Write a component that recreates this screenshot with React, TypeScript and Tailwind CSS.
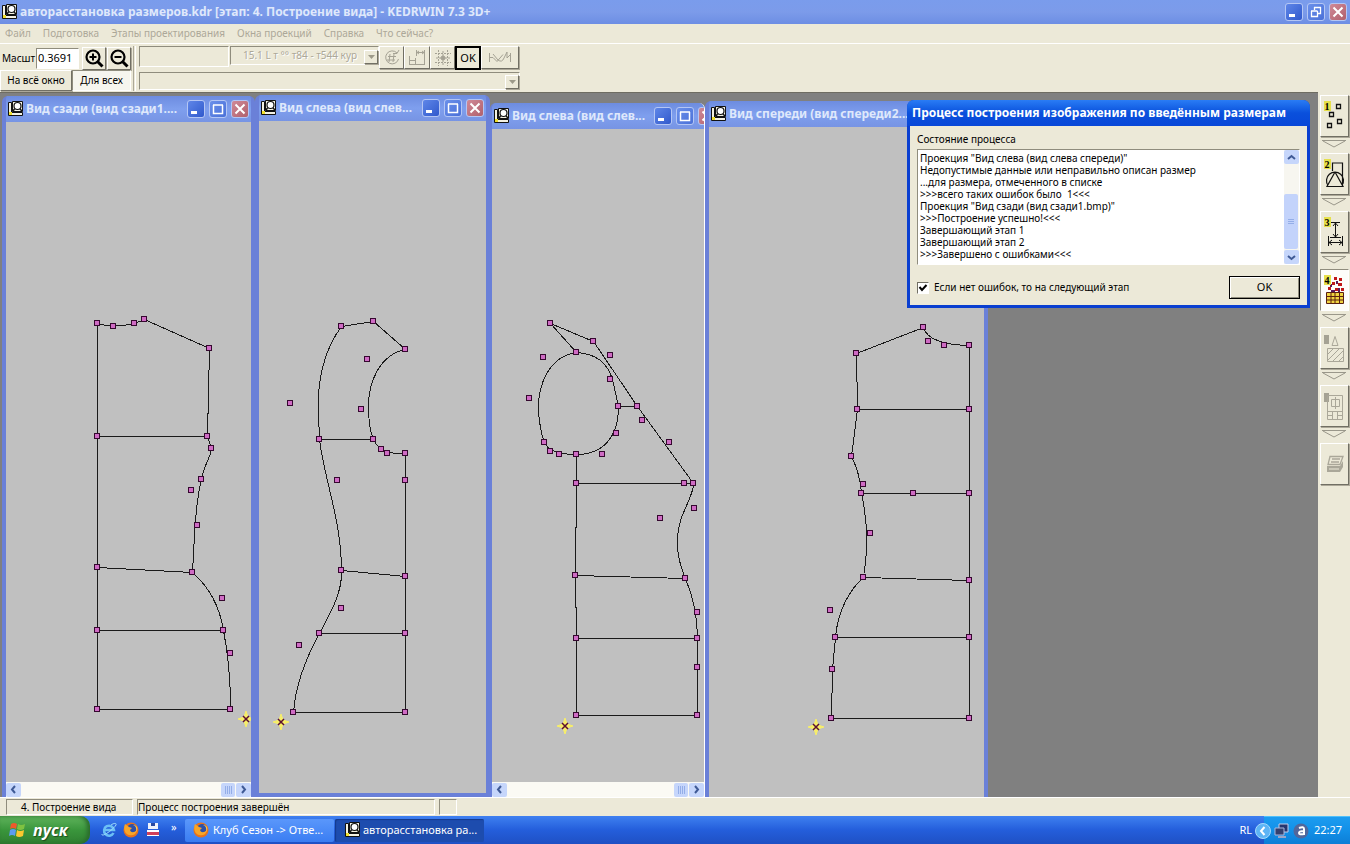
import { useState } from "react";
import type { ReactNode } from "react";

type Point = [number, number];

type Sheet = {
  origin: Point;
  paths: string[];
  nodes: Point[];
  star: Point;
};

const raised =
  "border border-t-white border-l-white border-r-[#716f64] border-b-[#716f64] shadow-[1px_1px_0_#aca899]";
const sunken =
  "border border-t-[#8f8c7d] border-l-[#8f8c7d] border-r-white border-b-white";
const disabledText = "text-[#aca899] [text-shadow:1px_1px_0_#ffffff]";

const menuItems = [
  "Файл",
  "Подготовка",
  "Этапы проектирования",
  "Окна проекций",
  "Справка",
  "Что сейчас?",
];

const logLines = [
  'Проекция "Вид слева (вид слева спереди)"',
  "Недопустимые данные или неправильно описан размер",
  "...для размера, отмеченного в списке",
  ">>>всего таких ошибок было  1<<<",
  'Проекция "Вид сзади (вид сзади1.bmp)"',
  ">>>Построение успешно!<<<",
  "Завершающий этап 1",
  "Завершающий этап 2",
  ">>>Завершено с ошибками<<<",
];

const backSheet: Sheet = {
  origin: [6, 122],
  paths: [
    "M97 323V709H230C230 685 229 660 223 630C219 605 208 586 192 572L194 535C195 515 197 495 201 479C203 465 210 458 211 448L207 436L209 348L144 319L134 323Q112 328 97 323",
    "M97 436H207",
    "M97 567L192 572",
    "M97 630H223",
  ],
  nodes: [
    [97, 323], [113, 326], [134, 323], [144, 319], [209, 348], [97, 436],
    [207, 436], [211, 448], [201, 479], [191, 490], [197, 525], [97, 567],
    [192, 572], [222, 598], [97, 630], [223, 630], [230, 653], [97, 709],
    [230, 709],
  ],
  star: [246, 719],
};

const leftBackSheet: Sheet = {
  origin: [259, 121],
  paths: [
    "M341 326L373 321L405 349C380 354 368 380 368 406C368 420 370 432 373 439Q378 449 387 452Q395 453 405 453V712H293C295 685 304 660 319 633C330 612 342 592 341 570C341 520 324 480 319 439C318 420 318 410 318 400C318 380 323 350 341 326",
    "M319 439H373",
    "M341 570L405 576",
    "M319 633H405",
  ],
  nodes: [
    [341, 326], [373, 321], [405, 349], [367, 359], [361, 409], [290, 403],
    [319, 439], [373, 439], [381, 449], [387, 453], [405, 453], [337, 480],
    [405, 480], [341, 570], [405, 576], [341, 608], [319, 633], [405, 633],
    [299, 645], [293, 712], [405, 712],
  ],
  star: [281, 722],
};

const leftFrontSheet: Sheet = {
  origin: [492, 129],
  paths: [
    "M576 352L550 323L593 341L637 406L693 483C693 498 677 515 677 538C676 555 681 568 685 578C692 595 697 618 697 638V715H576V638L575 575L576 483",
    "M576 454V483",
    "M576 352C548 356 538 385 538 406C538 420 541 435 544 442Q549 454 576 454C603 454 618 436 618 406L612 379C607 362 595 353 576 352",
    "M618 406H637",
    "M576 483H693",
    "M575 575L685 578",
    "M576 638H697",
  ],
  nodes: [
    [550, 323], [593, 341], [576, 352], [610, 355], [543, 357], [610, 379],
    [529, 398], [618, 406], [637, 406], [642, 420], [669, 442], [616, 433],
    [544, 442], [550, 451], [559, 454], [576, 454], [602, 454], [576, 483],
    [684, 483], [693, 483], [694, 508], [660, 518], [575, 575], [685, 578],
    [697, 612], [576, 638], [697, 638], [697, 667], [576, 715], [697, 715],
  ],
  star: [565, 726],
};

const frontSheet: Sheet = {
  origin: [709, 127],
  paths: [
    "M856 353L923 327Q928 344 969 345V718H831L832 669L835 637C837 612 848 590 863 577C868 548 867 520 861 493C860 478 856 466 851 456L857 409L856 353",
    "M857 409H969",
    "M861 493H969",
    "M863 577L969 580",
    "M835 637H969",
  ],
  nodes: [
    [923, 327], [928, 341], [944, 345], [969, 345], [856, 353], [857, 409],
    [969, 409], [851, 456], [863, 484], [861, 493], [913, 493], [969, 493],
    [870, 533], [863, 577], [969, 580], [830, 610], [835, 637], [969, 637],
    [832, 669], [831, 718], [969, 718],
  ],
  star: [816, 727],
};

function AppIcon() {
  return (
    <svg className="size-4 shrink-0" viewBox="0 0 16 16">
      <path d="M.5 1.500h3v10h11v3H.5z" fill="#f4f2e4" stroke="#111" />
      <path d="M1 11h3v3H1z" fill="#f0e030" />
      <path d="M4.500 .5h10v10h-10z" fill="#f4f2e4" stroke="#111" />
      <circle cx="9.500" cy="5" r="3.500" fill="#fff" stroke="#111" strokeWidth="1.200" />
      <path d="M12 8l2 2M6.500 8L5 10" stroke="#111" strokeWidth="1.500" />
    </svg>
  );
}

function CaptionButton({ kind }: { kind: "min" | "max" | "restore" | "close" }) {
  const tone =
    kind === "close"
      ? "from-[#d08a98] to-[#b0606c]"
      : kind === "min"
        ? "from-[#5f86e8] to-[#3159cc]"
        : "from-[#6b90ea] to-[#4a70d8]";
  return (
    <button
      type="button"
      aria-label={kind}
      className={`size-[18px] shrink-0 rounded-[3px] border border-[#b4c6f4] bg-gradient-to-br ${tone}`}
    >
      <svg className="size-4" viewBox="0 0 16 16" fill="none" stroke="#fff">
        {kind === "min" && <path d="M3 11.500h6" strokeWidth="3" />}
        {kind === "max" && <path d="M3 4h10M3.500 4v8.500h9V4" strokeWidth="1.500" />}
        {kind === "restore" && (
          <path d="M6 3.500h7M6.500 3v3M12.500 3v6.500H10M3 7h6.500M3.500 7v5.500h6V7" strokeWidth="1.300" />
        )}
        {kind === "close" && <path d="M3.500 3.500l9 9M12.500 3.500l-9 9" strokeWidth="2" />}
      </svg>
    </button>
  );
}

function Drawing({ sheet }: { sheet: Sheet }) {
  const [ox, oy] = sheet.origin;
  const [sx, sy] = sheet.star;
  return (
    <svg className="block min-h-0 w-full flex-1 bg-[#c0c0c0]" shapeRendering="crispEdges">
      <g transform={`translate(${-ox} ${-oy})`}>
        <g transform="translate(.5 .5)" fill="none" stroke="#1a1a1a">
          {sheet.paths.map((d) => (
            <path key={d} d={d} />
          ))}
        </g>
        {sheet.nodes.map(([x, y]) => (
          <g key={`${x}-${y}`}>
            <rect x={x - 3} y={y - 3} width="6" height="6" fill="#35082f" />
            <rect x={x - 2} y={y - 2} width="4" height="4" fill="#cf6bc4" />
          </g>
        ))}
        <g transform={`translate(${sx} ${sy})`} shapeRendering="auto">
          <path d="M0-8L2-2L8 0L2 2L0 8L-2 2L-8 0L-2-2z" fill="#f7ee6a" stroke="#f7ee6a" />
          <path d="M-3-3L3 3M3-3L-3 3" stroke="#5b1030" strokeWidth="1.500" />
        </g>
      </g>
    </svg>
  );
}

function ScrollArrow({ dir }: { dir: "left" | "right" | "up" | "down" }) {
  const d = {
    left: "M8 3L5 6.500L8 10",
    right: "M5 3L8 6.500L5 10",
    up: "M3 8L6.500 5L10 8",
    down: "M3 5L6.500 8L10 5",
  }[dir];
  return (
    <button
      type="button"
      aria-label={`scroll ${dir}`}
      className="h-[14px] w-[15px] shrink-0 rounded-[2px] bg-[#c6d6fb]"
    >
      <svg className="mx-auto size-[13px]" viewBox="0 0 13 13" fill="none" stroke="#3f5a96" strokeWidth="2">
        <path d={d} />
      </svg>
    </button>
  );
}

function HScroll() {
  return (
    <div className="flex h-[15px] shrink-0 items-center bg-[#fbfaf4]">
      <ScrollArrow dir="left" />
      <div className="flex-1" />
      <div className="mr-px flex h-[14px] w-[14px] items-center justify-center gap-px rounded-[2px] bg-[#c6d6fb]">
        <i className="h-2 w-px bg-[#94aee8]" />
        <i className="h-2 w-px bg-[#94aee8]" />
        <i className="h-2 w-px bg-[#94aee8]" />
        <i className="h-2 w-px bg-[#94aee8]" />
      </div>
      <ScrollArrow dir="right" />
    </div>
  );
}

type ViewProps = {
  title: string;
  frame: string;
  bar?: string;
  sheet: Sheet;
  scroll?: boolean;
};

function ViewWindow({ title, frame, bar = "", sheet, scroll }: ViewProps) {
  return (
    <section
      className={`absolute flex flex-col overflow-hidden rounded-t-[6px] border-[#6a80d8] bg-[#7a96df] ${frame}`}
    >
      <header
        className={`flex h-[26px] shrink-0 items-center gap-[2px] bg-gradient-to-b from-[#6d8ce0] via-[#7f9fee] to-[#7794e4] px-[2px] ${bar}`}
      >
        <AppIcon />
        <h2 className="min-w-0 flex-1 truncate text-[12px] font-bold text-[#dfe8fb]">
          {title}
        </h2>
        <div className="flex gap-1">
          <CaptionButton kind="min" />
          <CaptionButton kind="max" />
          <CaptionButton kind="close" />
        </div>
      </header>
      <Drawing sheet={sheet} />
      {scroll && <HScroll />}
    </section>
  );
}

function ToolButton({ label, className = "w-[24px]", children }: { label: string; className?: string; children: ReactNode }) {
  return (
    <button
      type="button"
      aria-label={label}
      className={`flex h-[23px] items-center justify-center bg-[#ece9d8] ${raised} ${className}`}
    >
      {children}
    </button>
  );
}

function Zoomer({ plus }: { plus?: boolean }) {
  return (
    <svg className="size-5" viewBox="0 0 20 20" fill="none" stroke="#000">
      <circle cx="9" cy="9" r="6.500" strokeWidth="2.200" />
      <path d="M13.500 13.500l5 5" strokeWidth="3" />
      <path d={plus ? "M5.500 9h7M9 5.500v7" : "M5.500 9h7"} strokeWidth="2" />
    </svg>
  );
}

function DropArrow() {
  return (
    <span
      className={`pointer-events-none absolute right-px bottom-px flex h-[14px] w-[14px] items-center justify-center bg-[#ece9d8] ${raised}`}
    >
      <svg className="h-1 w-[7px]" viewBox="0 0 7 4">
        <path d="M0 0h7L3.500 4z" fill="#9d9a8a" />
      </svg>
    </span>
  );
}

function Toolbar() {
  const [scale, setScale] = useState("0.3691");
  return (
    <div className="flex h-[49px] items-start border-t border-white pt-[2px]">
      <div className="w-[131px]">
        <div className="flex h-[24px] items-center">
          <label htmlFor="scale" className="w-[36px] pl-[2px]">
            Масшт
          </label>
          <input
            id="scale"
            value={scale}
            onChange={(e) => setScale(e.target.value)}
            className={`mr-[3px] h-[21px] w-[43px] bg-white pb-[2px] pl-px text-[11px] ${sunken}`}
          />
          <ToolButton label="Увеличить">
            <Zoomer plus />
          </ToolButton>
          <ToolButton label="Уменьшить" className="ml-px w-[24px]">
            <Zoomer />
          </ToolButton>
        </div>
        <div className="flex h-[21px]">
          <button type="button" className={`w-[72px] bg-[#ece9d8] ${raised}`}>
            На всё окно
          </button>
          <button type="button" className={`w-[59px] bg-[#f6f5ee] ${sunken}`}>
            Для всех
          </button>
        </div>
      </div>
      <div className="mx-[2px] h-[45px] w-[3px] border-x border-l-[#aca899] border-r-white" />
      <div className="w-[382px] pl-px">
        <div className="flex h-[24px]">
          <div className={`h-[21px] w-[90px] shrink-0 ${sunken}`} />
          <div className="relative ml-px h-[19px] w-[149px] shrink-0">
            <select
              disabled
              aria-label="Размер"
              className={`h-full w-full appearance-none pl-[12px] opacity-100 ${sunken} ${disabledText}`}
            >
              <option>15.1 L т °° т84 - т544 кур</option>
            </select>
            <DropArrow />
          </div>
          <ToolButton label="Поворот" className="w-[25px] shrink-0">
            <svg className="size-[18px]" viewBox="0 0 18 18" fill="none" stroke="#a5a294">
              <path d="M14 4A6.500 6.500 0 1 0 15.500 10M16 1l-2 3.500h-4M7 5L6 13M11 5l-1 8M5 7.500h8M4 11h8" />
            </svg>
          </ToolButton>
          <ToolButton label="Размеры" className="w-[26px] shrink-0">
            <svg className="size-[18px]" viewBox="0 0 18 18" fill="none" stroke="#a5a294">
              <path d="M1.500 7v9M1 11.500h6M7.500 9v6M1 15.500h16M8.500 1v6M16.500 1v14M9 3.500h7M11 2L9 3.500 11 5M14 2l2 1.500L14 5" />
            </svg>
          </ToolButton>
          <ToolButton label="Сетка" className="w-[25px] shrink-0">
            <svg className="size-[18px]" viewBox="0 0 18 18" fill="none" stroke="#a5a294">
              <path d="M4.500 1v16M13.500 1v16M1 4.500h16M1 13.500h16M9 2v14M2 9h14" strokeDasharray="2 1" />
              <circle cx="9" cy="9" r="2" fill="#a5a294" />
            </svg>
          </ToolButton>
          <button type="button" className="h-[24px] w-[26px] shrink-0 border-2 border-black bg-[#ece9d8] text-[11px]">
            OK
          </button>
          <ToolButton label="Кривая" className="w-[38px] shrink-0">
            <svg className="h-[18px] w-[24px]" viewBox="0 0 24 18" fill="none" stroke="#a5a294">
              <path d="M1.500 4v9M22.500 4v9M2 8.500h3l4 4 6-7M5 5l5 6q4 3 6-2l3-6v6l3-3" />
            </svg>
          </ToolButton>
        </div>
        <div className="relative mt-[2px] h-[18px] w-[381px]">
          <select disabled aria-label="Список" className={`h-full w-full appearance-none opacity-100 ${sunken}`} />
          <DropArrow />
        </div>
      </div>
    </div>
  );
}

function StageNumber({ n }: { n: string }) {
  return (
    <span className="absolute top-[5px] left-[3px] flex h-[10px] w-[7px] items-center justify-center bg-[#e6e04a] font-['Liberation_Serif'] text-[10px] font-bold">
      {n}
    </span>
  );
}

const stages: { n: string; name: string; art: ReactNode }[] = [
  {
    n: "1",
    name: "Точки",
    art: <path d="M15.500 8.500h4v4h-4zM8.500 16.500h4v4h-4zM16.500 23.500h4v4h-4zM6.500 27.500h4v4h-4z" stroke="#111" strokeWidth="1.300" />,
  },
  {
    n: "2",
    name: "Контуры",
    art: <path d="M11.500 17V9h10v24M14 18L6 32.500h16L14 18M7 31.500a8.500 8.500 0 1 1 14 0" stroke="#111" strokeWidth="1.200" />,
  },
  {
    n: "3",
    name: "Размеры",
    art: <path d="M9 10.500h10M14.500 11v14M12 14l2.500-3 2.500 3M12 22l2.500 3 2.500-3M9 25.500h11M7.500 24v10M21.500 24v10M8 30.500h13M11 28l-3 2.500 3 2.500M18 28l3 2.500-3 2.500" stroke="#111" />,
  },
  {
    n: "4",
    name: "Построение вида",
    art: (
      <>
        <path d="M5.500 22.500h17v11h-17z" fill="#f0d440" stroke="#5a2010" />
        <path d="M6 26.500h17M6 30h17M10 23v11M14 23v11M18.500 23v11" stroke="#5a2010" />
        <path d="M13 7h3v3h-3zM18 8h3v3h-3zM11 12h3v3h-3zM17 13h4v3h-4zM7 17h3v3H7zM14 18h3v3h-3zM20 18h3v3h-3z" fill="#c01818" />
        <path d="M9 14h2v3H9zM15 11h2v3h-2zM10 20h4v2h-4zM17 18h2v4h-2z" fill="#5a1a5a" />
      </>
    ),
  },
  {
    n: "",
    name: "Раскладка",
    art: <path d="M6.500 20.500h16v13h-16zM7 26l6-6M7 32l12-12M11 34l12-12M17 34l6-6M11 17.500l3-9 3 9z" stroke="#aaa799" />,
  },
  {
    n: "",
    name: "Чертёж",
    art: <path d="M6.500 9.500h15v24h-15zM10.500 13.500h8v7h-8zM14.500 11v12M7 25.500h14M11.500 26v7M16.500 26v7M7 29.500h5M16 29.500h5" stroke="#aaa799" />,
  },
  {
    n: "",
    name: "Печать",
    art: (
      <>
        <path d="M9 12.500h13l-3 8H7zM11 15h8M10 18h8" stroke="#aaa799" strokeWidth="1.300" />
        <path d="M6 22h13l3-5v6l-3 5H6z" fill="#aaa799" />
        <path d="M8 25h10" stroke="#ece9d8" />
      </>
    ),
  },
];

function StageBar() {
  return (
    <nav className="flex w-[32px] shrink-0 flex-col items-center bg-[#ece9d8] pt-[3px]">
      {stages.map((s, i) => (
        <div key={s.name} className="flex h-[58px] flex-col items-center">
          <button
            type="button"
            aria-label={s.name}
            className={`relative h-[42px] w-[29px] ${i === 3 ? `bg-[#fdfdfa] ${sunken}` : `bg-[#ece9d8] ${raised}`}`}
          >
            <svg className="h-10 w-[27px]" viewBox="0 0 27 40" fill="none">
              {i > 3 && i < 6 && <path d="M3 7h5v9H3z" fill="#a5a294" />}
              {s.art}
            </svg>
            {s.n && <StageNumber n={s.n} />}
          </button>
          {i < stages.length - 1 && (
            <svg className="mt-[3px] h-2 w-6" viewBox="0 0 24 8" fill="none">
              <path d="M0 .5h24M1 1l11 6L23 1" stroke="#9a978a" />
            </svg>
          )}
        </div>
      ))}
    </nav>
  );
}

function ProcessDialog() {
  const [next, setNext] = useState(true);
  return (
    <section
      role="dialog"
      aria-label="Процесс построения"
      className="absolute top-[7px] left-[907px] flex w-[403px] flex-col rounded-t-[7px] bg-[#0a3fd0] px-[3px] pb-[3px]"
    >
      <header className="-mx-[3px] flex h-[26px] items-center rounded-t-[7px] bg-gradient-to-b from-[#2a7cf5] via-[#0a50dc] to-[#0847d8] pl-[5px]">
        <h2 className="text-[12px] font-bold whitespace-nowrap text-white">
          Процесс построения изображения по введённым размерам
        </h2>
      </header>
      <div className="bg-[#ece9d8] px-[7px] pt-[5px] pb-[6px]">
        <label htmlFor="log" className="block h-[16px] leading-[16px]">
          Состояние процесса
        </label>
        <div className={`mt-[2px] flex h-[116px] bg-white ${sunken}`}>
          <textarea
            id="log"
            readOnly
            defaultValue={logLines.join("\n")}
            className="h-full min-w-0 flex-1 resize-none overflow-hidden pt-[2px] pl-[2px] leading-[12px] outline-none"
          />
          <div className="flex w-[15px] flex-col bg-[#f7f6f0]">
            <ScrollArrow dir="up" />
            <div className="flex-1" />
            <div className="mb-px flex h-[55px] w-[14px] flex-col items-center justify-center gap-px rounded-[2px] bg-[#c3d3fb]">
              <i className="h-px w-[6px] bg-[#94aee8]" />
              <i className="h-px w-[6px] bg-[#94aee8]" />
              <i className="h-px w-[6px] bg-[#94aee8]" />
            </div>
            <ScrollArrow dir="down" />
          </div>
        </div>
        <div className="mt-[11px] flex items-center justify-between">
          <label className="flex items-center gap-[5px]">
            <span className="relative flex size-[12px]">
              <input
                type="checkbox"
                checked={next}
                onChange={(e) => setNext(e.target.checked)}
                className="size-[12px] appearance-none border border-t-[#716f64] border-r-white border-b-white border-l-[#716f64] bg-white"
              />
              {next && (
                <svg className="pointer-events-none absolute inset-0 size-[12px]" viewBox="0 0 12 12" fill="none">
                  <path d="M2.500 5L5 8L9.500 3" stroke="#000" strokeWidth="2" />
                </svg>
              )}
            </span>
            Если нет ошибок, то на следующий этап
          </label>
          <button
            type="button"
            className="h-[23px] w-[71px] border border-black bg-[#ece9d8] text-[11px] shadow-[inset_1px_1px_0_#ffffff,inset_-1px_-1px_0_#8f8c7d]"
          >
            OK
          </button>
        </div>
      </div>
    </section>
  );
}

function Firefox() {
  return (
    <svg className="size-4 shrink-0" viewBox="0 0 16 16">
      <circle cx="8" cy="8" r="7.500" fill="#e8721c" />
      <circle cx="9" cy="6.500" r="4.500" fill="#2d4fa8" />
      <path d="M2 2l4 3 3 1-2 2c1 3 4 3 7 0-1 5-5 6-8 5C2 12 0 7 2 2z" fill="#f7a62a" />
      <path d="M10 3c3 1 4 4 3 7 2-2 2-7-3-7z" fill="#fbd34a" />
    </svg>
  );
}

function Taskbar() {
  return (
    <footer className="flex h-[28px] shrink-0 items-center bg-gradient-to-b from-[#3f80f0] via-[#245edb] to-[#1f50c4] text-[11px] text-white">
      <button
        type="button"
        className="flex h-full w-[90px] items-center gap-[6px] rounded-r-[10px] bg-gradient-to-b from-[#5fb45c] via-[#3a963c] to-[#2f7f31] pl-[9px] shadow-[inset_-3px_0_4px_#2a6b2c]"
      >
        <svg className="size-[18px]" viewBox="0 0 18 18">
          <path d="M2 3q3-2 6 0L7 8q-3-2-6 0z" fill="#f0592b" />
          <path d="M9 3q3 2 7 0l-1 5q-4 2-7 0z" fill="#7fc241" />
          <path d="M1 9q3-2 6 0l-1 6q-3-2-6 0z" fill="#5c9cf0" />
          <path d="M8 9q3 2 7 0l-1 6q-4 2-7 0z" fill="#fbc82f" />
        </svg>
        <span className="font-['Open_Sans'] text-[16px] font-bold italic [text-shadow:1px_1px_1px_#1c4a1d]">
          пуск
        </span>
      </button>
      <div className="ml-[11px] flex w-[84px] items-center gap-[6px]">
        <svg className="size-4" viewBox="0 0 16 16" fill="none">
          <path d="M12.500 11a5 5 0 1 1 .5-3H4" stroke="#6cc0f5" strokeWidth="2.500" />
          <path d="M1 12C0 16 12 8 15 3c1-3-4-1-5 0" stroke="#9fdcfb" />
        </svg>
        <Firefox />
        <svg className="size-4" viewBox="0 0 16 16">
          <path d="M3 1h10v6H3z" fill="#eef2fb" />
          <path d="M6 1h4v3H6z" fill="#2848a0" />
          <path d="M2 8h12v6H2z" fill="#fff" />
          <path d="M2 10h12v3H2z" fill="#d0405a" />
        </svg>
        <span className="mb-2 ml-1 text-[11px] leading-none">»</span>
      </div>
      <button
        type="button"
        className="flex h-[23px] w-[149px] items-center gap-1 rounded-[2px] bg-gradient-to-b from-[#5a97fb] to-[#3a7df2] pl-2"
      >
        <Firefox />
        <span className="whitespace-nowrap">Клуб Сезон -&gt; Отве...</span>
      </button>
      <button
        type="button"
        className="ml-px flex h-[23px] w-[149px] items-center gap-[2px] rounded-[2px] bg-[#1d4cae] pl-[10px] shadow-[inset_1px_1px_1px_#143a8c]"
      >
        <AppIcon />
        <span className="whitespace-nowrap">авторасстановка ра...</span>
      </button>
      <span className="mr-[12px] ml-auto">RL</span>
      <div className="flex h-full w-[86px] shrink-0 items-center gap-[3px] border-t border-[#4fc0fa] bg-gradient-to-b from-[#1c9cf0] via-[#1290e8] to-[#0d7ed6]">
        <svg className="-ml-[9px] size-4 shrink-0" viewBox="0 0 16 16" fill="none">
          <circle cx="8" cy="8" r="7.500" fill="#5db4f5" stroke="#a6dafc" />
          <path d="M9.500 4L6 8l3.500 4" stroke="#fff" strokeWidth="2" />
        </svg>
        <svg className="size-4 shrink-0" viewBox="0 0 16 16">
          <path d="M5 1h9v8H5z" fill="#26356f" stroke="#c6cde8" />
          <path d="M1 5h9v7H1z" fill="#33406e" stroke="#aab6dc" />
          <path d="M4 13h8v2H4z" fill="#9aa4c8" />
        </svg>
        <svg className="size-4 shrink-0" viewBox="0 0 16 16" fill="none">
          <circle cx="8" cy="8" r="7.500" fill="#51679c" />
          <path d="M6 5q5-2 5 1v6M11 8q-5 0-5 2t5 1" stroke="#fff" strokeWidth="2" />
        </svg>
        <time className="ml-[2px]">22:27</time>
      </div>
    </footer>
  );
}

export default function App() {
  return (
    <div className="flex h-screen flex-col overflow-hidden bg-[#ece9d8] font-['Noto_Sans',sans-serif] text-[10px] text-black">
      <header className="flex h-[24px] shrink-0 items-center gap-[2px] bg-gradient-to-b from-[#7a9cec] via-[#7c9bea] to-[#6d8ee4] pr-[3px] pl-[2px]">
        <AppIcon />
        <h1 className="flex-1 truncate text-[12px] font-bold text-[#dfe8fb]">
          авторасстановка размеров.kdr [этап: 4. Построение вида] - KEDRWIN 7.3 3D+
        </h1>
        <div className="flex gap-1">
          <CaptionButton kind="min" />
          <CaptionButton kind="restore" />
          <CaptionButton kind="close" />
        </div>
      </header>
      <nav className={`flex h-[19px] shrink-0 items-center gap-3 pl-[5px] ${disabledText}`}>
        {menuItems.map((item) => (
          <button key={item} type="button" disabled>
            {item}
          </button>
        ))}
      </nav>
      <Toolbar />
      <div className="flex min-h-0 flex-1">
        <main className="relative min-w-0 flex-1 overflow-hidden border-t border-[#6e6c62] bg-[#808080]">
          <ViewWindow
            title="Вид сзади (вид сзади1...."
            frame="top-[3px] left-[2px] bottom-0 w-[253px] border-x-4"
            sheet={backSheet}
            scroll
          />
          <ViewWindow
            title="Вид слева (вид слев..."
            frame="top-[2px] left-[255px] bottom-0 w-[235px] border-x-4 border-b-4"
            sheet={leftBackSheet}
          />
          <ViewWindow
            title="Вид слева (вид слев..."
            frame="top-[10px] left-[490px] bottom-0 w-[215px] border-l-2 border-r border-r-white"
            bar="w-[226px]"
            sheet={leftFrontSheet}
            scroll
          />
          <ViewWindow
            title="Вид спереди (вид спереди2..."
            frame="top-[8px] left-[705px] bottom-0 w-[283px] border-x-4"
            sheet={frontSheet}
          />
          <ProcessDialog />
        </main>
        <StageBar />
      </div>
      <div className="flex h-[19px] shrink-0 items-end gap-1 border-t border-white pl-[6px] pb-px">
        <div className={`h-[16px] w-[127px] pl-[14px] leading-[15px] ${sunken}`}>4. Построение вида</div>
        <div className={`h-[16px] w-[298px] leading-[15px] ${sunken}`}>Процесс построения завершён</div>
        <div className={`h-[16px] w-[18px] ${sunken}`} />
      </div>
      <Taskbar />
    </div>
  );
}
